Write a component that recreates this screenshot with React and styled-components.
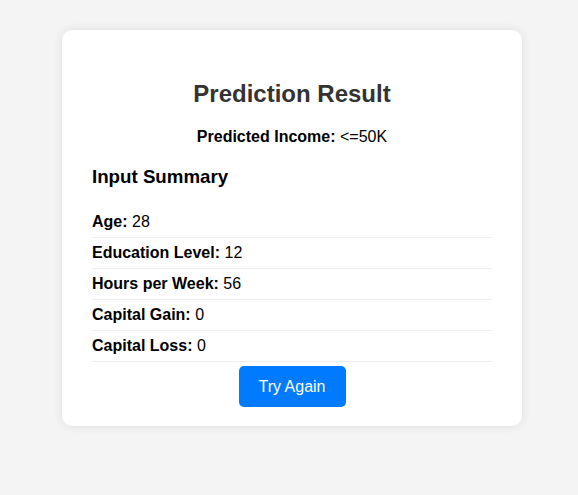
import React from "react";
import styled, { createGlobalStyle } from "styled-components";

const GlobalStyle = createGlobalStyle`
  html, body {
    margin: 0;
    background: #f4f4f4;
    font-family: "Liberation Sans", Arial, sans-serif;
  }
`;

const Page = styled.div`
  min-height: 495px;
  padding: 30px 0 0 6px;
  box-sizing: border-box;
`;

const Card = styled.div`
  width: 460px;
  box-sizing: border-box;
  margin: 0 auto;
  background: #fff;
  border-radius: 10px;
  padding: 30px 30px 19px;
  box-shadow: 0 0 10px rgba(0, 0, 0, 0.1);
`;

const Title = styled.h2`
  margin: 20px 0;
  font-size: 24px;
  color: #333;
  text-align: center;
`;

const Result = styled.p`
  margin: 0;
  font-size: 16px;
  text-align: center;
  color: #000;
`;

const Subtitle = styled.h3`
  margin: 20px 0 19px;
  font-size: 18.72px;
  color: #000;
`;

const List = styled.ul`
  list-style: none;
  margin: 0;
  padding: 0;
`;

const Row = styled.li`
  padding: 3px 0;
  line-height: 24px;
  font-size: 16px;
  border-bottom: 1px solid #eee;
`;

const Actions = styled.div`
  display: flex;
  justify-content: center;
  margin-top: 4px;
`;

const Button = styled.button`
  height: 41px;
  padding: 0 20px;
  border: none;
  border-radius: 5px;
  background: #007bff;
  color: #fff;
  font-family: inherit;
  font-size: 16px;
  cursor: pointer;
`;

const summary = [
  ["Age", "28"],
  ["Education Level", "12"],
  ["Hours per Week", "56"],
  ["Capital Gain", "0"],
  ["Capital Loss", "0"],
];

export default function App() {
  return (
    <Page>
      <GlobalStyle />
      <Card>
        <Title>Prediction Result</Title>
        <Result>
          <strong>Predicted Income:</strong> &lt;=50K
        </Result>
        <Subtitle>Input Summary</Subtitle>
        <List>
          {summary.map(([label, value]) => (
            <Row key={label}>
              <strong>{label}:</strong> {value}
            </Row>
          ))}
        </List>
        <Actions>
          <Button>Try Again</Button>
        </Actions>
      </Card>
    </Page>
  );
}
